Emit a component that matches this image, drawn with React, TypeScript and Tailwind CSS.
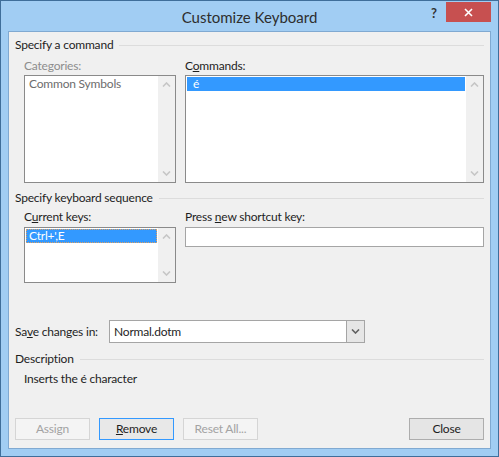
import React from "react";

function Heading({ text }: { text: string }) {
  return (
    <div className="flex h-4 items-center gap-[6px] leading-4">
      <span className="text-[#1e1e1e]">{text}</span>
      <div className="h-px flex-1 bg-[#dcdcdc]" />
    </div>
  );
}

function Chevron({ up, color = "#c6c6c6" }: { up?: boolean; color?: string }) {
  return (
    <svg width="9" height="5" viewBox="0 0 9 5">
      <polyline
        points={up ? "1,4.5 4.5,1 8,4.5" : "1,0.5 4.5,4 8,0.5"}
        fill="none"
        stroke={color}
        strokeWidth="1.6"
      />
    </svg>
  );
}

function ScrollBar() {
  return (
    <div className="flex w-[17px] flex-col justify-between bg-[#f0f0f0]">
      <div className="flex h-[17px] items-center justify-center">
        <Chevron up />
      </div>
      <div className="flex h-[17px] items-center justify-center">
        <Chevron />
      </div>
    </div>
  );
}

function Btn({
  children,
  disabled,
  focused,
}: {
  children: React.ReactNode;
  disabled?: boolean;
  focused?: boolean;
}) {
  let cls = "border-[#adadad] bg-[#e5e5e5] text-[#1e1e1e]";
  if (disabled) cls = "border-[#d5d5d5] bg-[#f4f4f4] text-[#a3a3a3]";
  if (focused) cls = "border-[#3399ff] bg-[#e8e8e8] text-[#1e1e1e]";
  return (
    <div className={`flex h-[22px] w-[75px] items-center justify-center border leading-4 ${cls}`}>
      {children}
    </div>
  );
}

export default function App() {
  return (
    <div className="relative flex h-[457px] w-[499px] flex-col border border-[#3f6e9a] bg-[#a1cdf3] font-['Lato',sans-serif] text-[12px]">
      {/* title bar */}
      <div className="flex h-[30px] items-center justify-center pt-[2px] text-[15px] text-[#2e2e2e]">
        Customize Keyboard
      </div>
      <div className="absolute right-[61px] top-[4px] text-[13px] font-bold leading-4 text-[#333333]">?</div>
      <div className="absolute right-[7px] top-[1px] flex h-[20px] w-[45px] items-center justify-center bg-[#c75050]">
        <svg width="9" height="9" viewBox="0 0 9 9">
          <path d="M1 1 L8 8 M8 1 L1 8" stroke="#ffffff" strokeWidth="1.6" />
        </svg>
      </div>

      {/* client panel */}
      <div className="mx-[7px] flex h-[418px] flex-col border border-[#80a9d1] bg-[#f0f0f0] px-[6px] pb-[8px] pt-[5px] tracking-[-0.2px]">
        <Heading text="Specify a command" />
        <div className="mt-[5px] flex gap-[9px] pl-[9px]">
          <div className="flex w-[152px] flex-col">
            <div className="h-4 leading-4 text-[#8d8d8d]">Categories:</div>
            <div className="mt-[1px] flex h-[108px] border border-[#8a8a8a] bg-white">
              <div className="flex-1 p-px">
                <div className="h-[14px] pl-[3px] leading-[14px] text-[#6d6d6d]">Common Symbols</div>
              </div>
              <ScrollBar />
            </div>
          </div>
          <div className="flex flex-1 flex-col">
            <div className="h-4 leading-4 text-[#1e1e1e]">
              C<span className="underline">o</span>mmands:
            </div>
            <div className="mt-[1px] flex h-[108px] border border-[#8a8a8a] bg-white">
              <div className="flex-1 p-px">
                <div className="h-[14px] bg-[#3399ff] pl-[6px] leading-[14px] text-white">é</div>
              </div>
              <ScrollBar />
            </div>
          </div>
        </div>

        <div className="mt-[7px]">
          <Heading text="Specify keyboard sequence" />
        </div>
        <div className="mt-[3px] flex gap-[9px] pl-[9px]">
          <div className="flex w-[152px] flex-col">
            <div className="h-4 leading-4 text-[#1e1e1e]">
              C<span className="underline">u</span>rrent keys:
            </div>
            <div className="mt-[2px] flex h-[56px] border border-[#8a8a8a] bg-white">
              <div className="flex-1 p-px">
                <div className="h-[14px] border border-dotted border-[#e0a060] bg-[#3399ff] pl-[2px] leading-[12px] text-white">
                  Ctrl+&apos;,E
                </div>
              </div>
              <ScrollBar />
            </div>
          </div>
          <div className="flex flex-1 flex-col">
            <div className="h-4 leading-4 text-[#1e1e1e]">
              Press <span className="underline">n</span>ew shortcut key:
            </div>
            <div className="mt-[2px] h-[20px] border border-[#a5a5a5] bg-white" />
          </div>
        </div>

        <div className="mt-[37px] flex h-[23px] items-center">
          <div className="w-[94px] leading-4 text-[#1e1e1e]">
            Sa<span className="underline">v</span>e changes in:
          </div>
          <div className="flex h-[23px] w-[256px] border border-[#a5a5a5] bg-white">
            <div className="flex flex-1 items-center pl-[4px] leading-4 text-[#1e1e1e]">Normal.dotm</div>
            <div className="flex w-[18px] items-center justify-center border-l border-[#a5a5a5] bg-[#e6e6e6]">
              <Chevron color="#606060" />
            </div>
          </div>
        </div>

        <div className="mt-[8px]">
          <Heading text="Description" />
        </div>
        <div className="mt-[4px] pl-[9px] leading-4 text-[#1e1e1e]">Inserts the é character</div>

        <div className="mt-auto flex gap-[9px]">
          <Btn disabled>Assign</Btn>
          <Btn focused>
            <span>
              <span className="underline">R</span>emove
            </span>
          </Btn>
          <Btn disabled>Reset All...</Btn>
          <div className="flex-1" />
          <Btn>Close</Btn>
        </div>
      </div>
    </div>
  );
}
